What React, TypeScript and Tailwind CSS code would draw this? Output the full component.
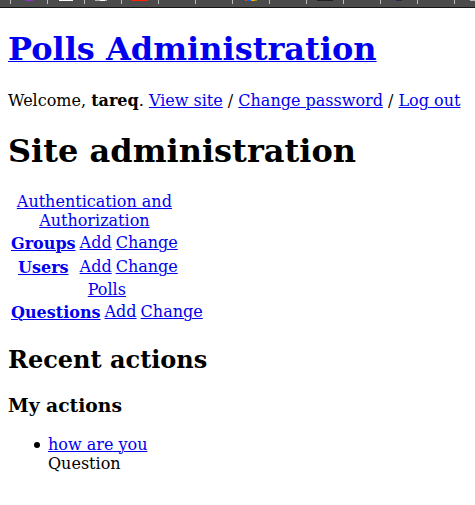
import React from "react";

const link = "text-[#0000ee] underline decoration-1";

function A({ children }: { children: React.ReactNode }) {
  return <a className={link} href="#">{children}</a>;
}

function ModelRow({ name }: { name: string }) {
  return (
    <tr>
      <th className="px-px pt-[2px] pb-px align-top font-bold"><A>{name}</A></th>
      <td className="p-px align-top"><A>Add</A></td>
      <td className="p-px align-top"><A>Change</A></td>
    </tr>
  );
}

const tabs = [
  <i className="ml-[14px] h-px w-[8px] bg-[#8a35c4]" />,
  <i className="ml-[11px] h-px w-[14px] bg-[#f4faf7]" />,
  <i className="ml-[10px] flex h-px w-[12px] bg-[#b5b5b5]"><b className="ml-[5px] w-[5px] bg-white" /></i>,
  <i className="ml-[10px] h-px w-[16px] bg-[#ff2200]" />,
  null,
  null,
  <i className="ml-[12px] flex h-px w-[12px]">
    <b className="w-[2px] bg-[#db3c45]" />
    <b className="w-[4px] bg-[#0868e8]" />
    <b className="w-[4px] bg-[#fbb100]" />
    <b className="w-[2px] bg-[#6fa01c]" />
  </i>,
  null,
  <i className="ml-[10px] h-px w-[16px] bg-[#202020]" />,
  null,
  <i className="ml-[15px] h-px w-[6px] bg-[#29264a]" />,
  null,
  <i className="ml-[15px] h-px w-[5px] bg-[#b8b8b8]" />,
];

function TabStrip() {
  return (
    <div className="flex h-[8px] border-b border-[#151515] bg-[#4b4b4b] pl-[10px]">
      {tabs.map((icon, i) => (
        <div key={i} className="flex h-[4px] w-[37px] shrink-0 border-l border-[#bdbdbd]">{icon}</div>
      ))}
    </div>
  );
}

export default function App() {
  return (
    <div className="h-[505px] overflow-hidden bg-white font-['DejaVu_Serif',serif] text-[16px] leading-[19px] text-black">
      <TabStrip />
      <main className="px-2 pt-[22px]">
        <h1 className="text-[32px] leading-[38px] font-bold"><A>Polls Administration</A></h1>
        <p className="mt-[23px] whitespace-nowrap">
          Welcome, <strong>tareq</strong>. <A>View site</A> / <A>Change password</A> / <A>Log out</A>
        </p>
        <h1 className="mt-[22px] text-[32px] leading-[38px] font-bold">Site administration</h1>
        <table className="mt-[22px] border-separate border-spacing-[2px]">
          <caption className="text-center"><A>Authentication and Authorization</A></caption>
          <tbody><ModelRow name="Groups" /><ModelRow name="Users" /></tbody>
        </table>
        <table className="border-separate border-spacing-[2px]">
          <caption><A>Polls</A></caption>
          <tbody><ModelRow name="Questions" /></tbody>
        </table>
        <h2 className="mt-[21px] text-[24px] leading-[28px] font-bold">Recent actions</h2>
        <h3 className="mt-[20px] text-[18.72px] leading-[22px] font-bold">My actions</h3>
        <ul className="mt-[19px] pl-[26px]">
          <li className="flex">
            <span className="mt-[7px] mr-[8px] size-[6px] shrink-0 rounded-full bg-black" />
            <div><A>how are you</A><br />Question</div>
          </li>
        </ul>
      </main>
    </div>
  );
}
